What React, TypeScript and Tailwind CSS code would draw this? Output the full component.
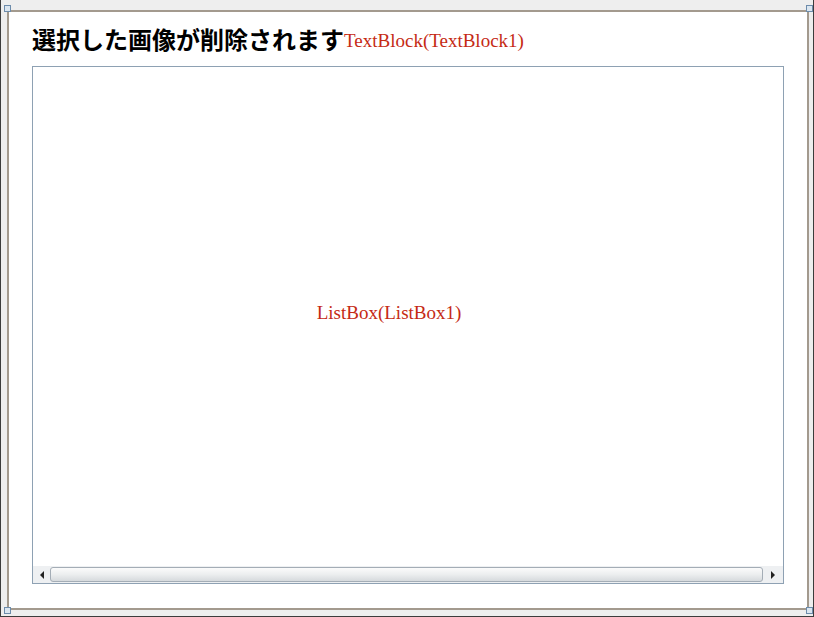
import React from "react";

const Handle: React.FC<{ className: string }> = ({ className }) => (
  <div
    className={`absolute h-[7px] w-[7px] border border-[#6d8cab] bg-[#dbe6f0] ${className}`}
  />
);

const App: React.FC = () => {
  return (
    <div className="relative h-[617px] w-[814px] overflow-hidden border-r border-b border-l border-[#3c3c3c] bg-[#eeeeee]">
      <div className="ml-[6px] mt-[10px] flex h-[600px] w-[802px] flex-col border-2 border-[#a39a8e] bg-white px-[23px] pt-[12px] pb-[24px]">
        <div className="flex h-[42px] items-start">
          <span
            className="text-[24px] font-bold leading-[30px] text-black"
            style={{ fontFamily: '"Noto Sans CJK JP", sans-serif' }}
          >
            選択した画像が削除されます
          </span>
          <span
            className="mt-[4px] text-[19px] leading-[26px] text-[#c52a14]"
            style={{ fontFamily: '"Liberation Serif", serif' }}
          >
            TextBlock(TextBlock1)
          </span>
        </div>

        <div className="flex flex-1 flex-col border border-[#8ea1b3] bg-white">
          <div className="flex flex-1 items-center justify-center pr-[38px] pb-[6px]">
            <span
              className="text-[19px] text-[#c52a14]"
              style={{ fontFamily: '"Liberation Serif", serif' }}
            >
              ListBox(ListBox1)
            </span>
          </div>
          <div className="flex h-[17px] items-stretch bg-[#eef0f2]">
            <div className="flex w-[17px] items-center justify-center">
              <div className="h-0 w-0 border-y-[4px] border-r-[4px] border-y-transparent border-r-[#222]" />
            </div>
            <div className="my-[1px] flex-1 rounded-[3px] border border-[#a4adb6] bg-gradient-to-b from-[#fbfbfb] via-[#eceeef] to-[#d6dadd]" />
            <div className="flex w-[20px] items-center justify-center">
              <div className="h-0 w-0 border-y-[4px] border-l-[4px] border-y-transparent border-l-[#222]" />
            </div>
          </div>
        </div>
      </div>

      <Handle className="left-[3px] top-[5px]" />
      <Handle className="right-[0px] top-[5px]" />
      <Handle className="left-[3px] bottom-[2px]" />
      <Handle className="right-[0px] bottom-[2px]" />
    </div>
  );
};

export default App;
